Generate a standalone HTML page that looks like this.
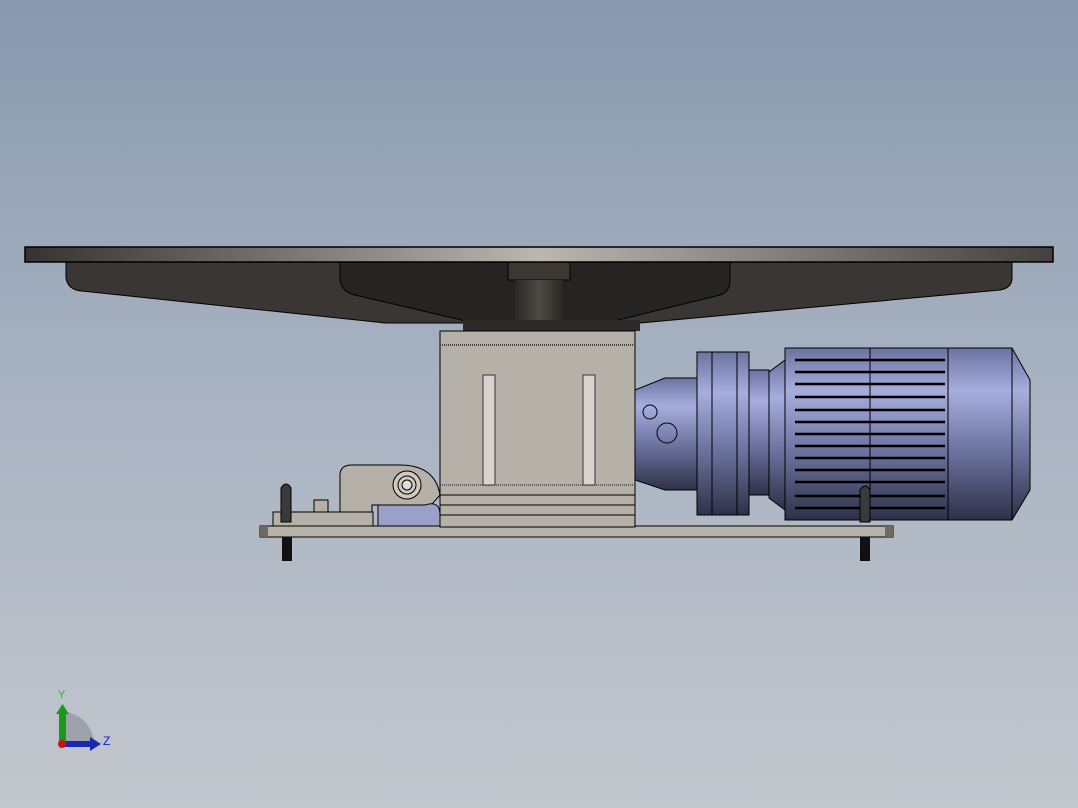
<!DOCTYPE html>
<html><head><meta charset="utf-8"><style>
html,body{margin:0;padding:0;width:1078px;height:808px;overflow:hidden}
body{background:linear-gradient(#8899ae 0%,#a6b1c0 45%,#c3c7ce 100%);font-family:"Liberation Sans",sans-serif}
svg{position:absolute;left:0;top:0}
</style></head><body>
<svg width="1078" height="808" viewBox="0 0 1078 808">
<defs>
<linearGradient id="top" x1="0" x2="1"><stop offset="0" stop-color="#35332f"/><stop offset="0.5" stop-color="#bbb6ae"/><stop offset="1" stop-color="#44413d"/></linearGradient>
<linearGradient id="blue" x1="0" y1="0" x2="0" y2="1"><stop offset="0" stop-color="#6c73a0"/><stop offset="0.25" stop-color="#a7aede"/><stop offset="0.6" stop-color="#6c739f"/><stop offset="1" stop-color="#2e3148"/></linearGradient>
<linearGradient id="shaft" x1="0" x2="1"><stop offset="0" stop-color="#2a2927"/><stop offset="0.5" stop-color="#4d4944"/><stop offset="1" stop-color="#2a2927"/></linearGradient>
</defs>
<!-- underframe -->
<path d="M66 262 L66 278 Q68 290 82 291 L385 323 L640 323 L1000 290 Q1012 288 1012 278 L1012 262 Z" fill="#3a3633" stroke="#000" stroke-width="1"/>
<path d="M340 262 L340 280 Q342 292 355 295 L470 322 L610 322 L720 295 Q730 292 730 280 L730 262 Z" fill="#252422" stroke="#000" stroke-width="1"/>
<rect x="508" y="262" width="62" height="18" fill="#3b3834" stroke="#000"/>
<rect x="515" y="280" width="48" height="44" fill="url(#shaft)"/>
<rect x="463" y="320" width="177" height="11" fill="#2b2a28"/>
<!-- top plate -->
<rect x="25" y="247" width="1028" height="15" fill="url(#top)" stroke="#000" stroke-width="1.5"/>
<!-- base plate -->
<rect x="260" y="526" width="633" height="11" fill="#b8b3aa" stroke="#000"/>
<rect x="260" y="526" width="8" height="11" fill="#6e6a63"/>
<rect x="885" y="526" width="8" height="11" fill="#6e6a63"/>
<rect x="282" y="537" width="10" height="24" fill="#111"/>
<rect x="860" y="537" width="10" height="24" fill="#111"/>
<!-- box -->
<rect x="440" y="331" width="195" height="196" fill="#b5b1a9" stroke="#000"/>
<line x1="440" y1="345" x2="635" y2="345" stroke="#444" stroke-width="2" stroke-dasharray="1 1"/>
<line x1="440" y1="485" x2="635" y2="485" stroke="#444" stroke-width="1.5" stroke-dasharray="1 1"/>
<line x1="440" y1="495" x2="635" y2="495" stroke="#000"/>
<line x1="440" y1="505" x2="635" y2="505" stroke="#000"/>
<line x1="440" y1="515" x2="635" y2="515" stroke="#000"/>
<rect x="483" y="375" width="12" height="110" fill="#d8d4cd" stroke="#333"/>
<rect x="583" y="375" width="12" height="110" fill="#d8d4cd" stroke="#333"/>
<!-- left bracket -->
<rect x="273" y="512" width="100" height="14" fill="#b5b1a9" stroke="#000"/>
<path d="M340 512 L340 475 Q340 465 352 465 L400 465 Q435 465 440 495 L425 512 L382 512 L382 505 L372 505 L372 512 Z" fill="#b5b1a9" stroke="#000"/>
<path d="M378 505 L425 505 Q440 500 440 515 L440 526 L378 526 Z" fill="#9aa0c8" stroke="#000"/>
<circle cx="407" cy="485" r="14" fill="#cfc9be" stroke="#000"/>
<circle cx="407" cy="485" r="9" fill="none" stroke="#000"/>
<circle cx="407" cy="485" r="5" fill="#ddd" stroke="#000"/>
<rect x="314" y="500" width="14" height="12" fill="#b5b1a9" stroke="#000"/>
<path d="M281 522 L281 488 Q286 480 291 488 L291 522 Z" fill="#3a3a3a" stroke="#000"/>
<!-- gearbox -->
<path d="M635 390 L665 378 L700 378 L700 490 L665 490 L635 480 Z" fill="url(#blue)" stroke="#000"/>
<circle cx="650" cy="412" r="7" fill="none" stroke="#000"/>
<circle cx="667" cy="433" r="10" fill="none" stroke="#000"/>
<!-- flange -->
<rect x="697" y="352" width="52" height="163" fill="url(#blue)" stroke="#000"/>
<rect x="712" y="352" width="25" height="163" fill="none" stroke="#000"/>
<rect x="749" y="370" width="20" height="125" fill="url(#blue)" stroke="#000"/>
<path d="M769 372 L785 360 L785 510 L769 498 Z" fill="url(#blue)" stroke="#000"/>
<!-- fins -->
<rect x="785" y="348" width="163" height="172" fill="url(#blue)" stroke="#000"/>
<g stroke="#000" stroke-width="2.5">
<line x1="795" y1="360" x2="945" y2="360"/><line x1="795" y1="372" x2="945" y2="372"/>
<line x1="795" y1="384" x2="945" y2="384"/><line x1="795" y1="397" x2="945" y2="397"/>
<line x1="795" y1="410" x2="945" y2="410"/><line x1="795" y1="422" x2="945" y2="422"/>
<line x1="795" y1="434" x2="945" y2="434"/><line x1="795" y1="446" x2="945" y2="446"/>
<line x1="795" y1="458" x2="945" y2="458"/><line x1="795" y1="470" x2="945" y2="470"/>
<line x1="795" y1="482" x2="945" y2="482"/><line x1="795" y1="496" x2="945" y2="496"/>
<line x1="795" y1="508" x2="945" y2="508"/>
</g>
<line x1="870" y1="348" x2="870" y2="520" stroke="#000"/>
<!-- end cap -->
<path d="M948 348 L1012 348 L1030 380 L1030 490 L1012 520 L948 520 Z" fill="url(#blue)" stroke="#000"/>
<line x1="1012" y1="348" x2="1012" y2="520" stroke="#000"/>
<path d="M860 522 L860 490 Q865 482 870 490 L870 522 Z" fill="#3a3a3a" stroke="#000"/>
<!-- triad -->
<path d="M62 744 L62 712 A32 32 0 0 1 94 744 Z" fill="#8f949c" opacity="0.7"/>
<rect x="59" y="712" width="7" height="32" fill="#1a9a1a"/>
<path d="M56 714 L62.5 704 L69 714 Z" fill="#1a9a1a"/>
<rect x="62" y="741" width="30" height="6" fill="#1a2ab0"/>
<path d="M90 737 L101 744 L90 751 Z" fill="#1a2ab0"/>
<circle cx="62" cy="744" r="4" fill="#d01010"/>
<text x="58" y="698" font-size="11" fill="#10c010" font-family="Liberation Sans">Y</text>
<text x="103" y="745" font-size="12" fill="#1020e0" font-family="Liberation Sans">Z</text>
</svg>
</body></html>
